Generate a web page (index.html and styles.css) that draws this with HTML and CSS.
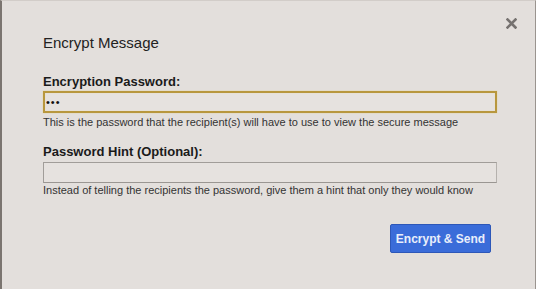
FILE: index.html
```html
<!DOCTYPE html>
<html lang="en">
<head>
  <meta charset="UTF-8">
  <title>Encrypt Message</title>
  <link rel="stylesheet" href="styles.css">
</head>
<body>
  <div class="dialog">
    <button class="close-btn" aria-label="Close">
      <svg width="11" height="11" viewBox="0 0 11 11">
        <path d="M1.5 1.5 L9.5 9.5 M9.5 1.5 L1.5 9.5" stroke="#767270" stroke-width="2.6" stroke-linecap="square"/>
      </svg>
    </button>
    <h1 class="dialog-title">Encrypt Message</h1>

    <label class="field-label" for="enc-pass">Encryption Password:</label>
    <input class="field-input focused" id="enc-pass" type="password" value="abc">
    <p class="field-help">This is the password that the recipient(s) will have to use to view the secure message</p>

    <label class="field-label second" for="enc-hint">Password Hint (Optional):</label>
    <input class="field-input" id="enc-hint" type="text">
    <p class="field-help tight">Instead of telling the recipients the password, give them a hint that only they would know</p>

    <div class="dialog-actions">
      <button class="send-btn">Encrypt &amp; Send</button>
    </div>
  </div>
</body>
</html>
```

FILE: styles.css
```css
* {
  margin: 0;
  padding: 0;
  box-sizing: border-box;
}
:root {
  --bg: #e3dfdc;
  --edge: #7b7570;
  --text: #1a1a1a;
  --help: #333;
  --gold: #b8973e;
  --blue: #3a6cd9;
}
body {
  font-family: "Liberation Sans", Arial, sans-serif;
  background: var(--bg);
  color: var(--text);
  width: 536px;
  height: 289px;
  overflow: hidden;
}

/* Dialog shell */
.dialog {
  position: relative;
  height: 289px;
  border-left: 2px solid var(--edge);
  border-right: 1px solid #9a948f;
  border-top: 1px solid #d2cdc9;
  padding: 33px 38px 0 41px;
}
.close-btn {
  position: absolute;
  top: 17px;
  right: 18px;
  border: none;
  background: none;
  line-height: 0;
  cursor: pointer;
}
.dialog-title {
  font-size: 15px;
  font-weight: normal;
  line-height: 18px;
  color: #222;
  margin-bottom: 22px;
}

/* Form fields */
.field-label {
  display: block;
  font-size: 13px;
  font-weight: bold;
  line-height: 16px;
  margin-bottom: 1px;
}
.field-label.second {
  margin-bottom: 2px;
}
.field-input {
  display: block;
  width: 454px;
  height: 21px;
  border: 1px solid #a19d99;
  border-right-color: #b5b1ad;
  border-bottom-color: #9a9692;
  background: #e6e2df;
  font-family: "Liberation Sans", Arial, sans-serif;
  font-size: 11px;
  padding: 0 1px;
  outline: none;
}
.field-input.focused {
  height: 22px;
  border: 2px solid var(--gold);
  box-shadow: inset 0 0 1px #f2d98c, 0 0 1px #e6cc7a;
  color: #111;
  letter-spacing: 1px;
}
.field-help {
  font-size: 11px;
  line-height: 13px;
  color: var(--help);
  margin-top: 3px;
  margin-bottom: 15px;
}
.field-help.tight {
  margin-top: 1px;
  margin-bottom: 0;
}

/* Actions */
.dialog-actions {
  display: flex;
  justify-content: flex-end;
  margin-top: 27px;
  padding-right: 6px;
}
.send-btn {
  width: 101px;
  height: 29px;
  background: var(--blue);
  border: 1px solid #2d57b8;
  border-radius: 2px;
  color: #e9eefb;
  font-family: "Liberation Sans", Arial, sans-serif;
  font-size: 12px;
  font-weight: bold;
  cursor: pointer;
}
```
